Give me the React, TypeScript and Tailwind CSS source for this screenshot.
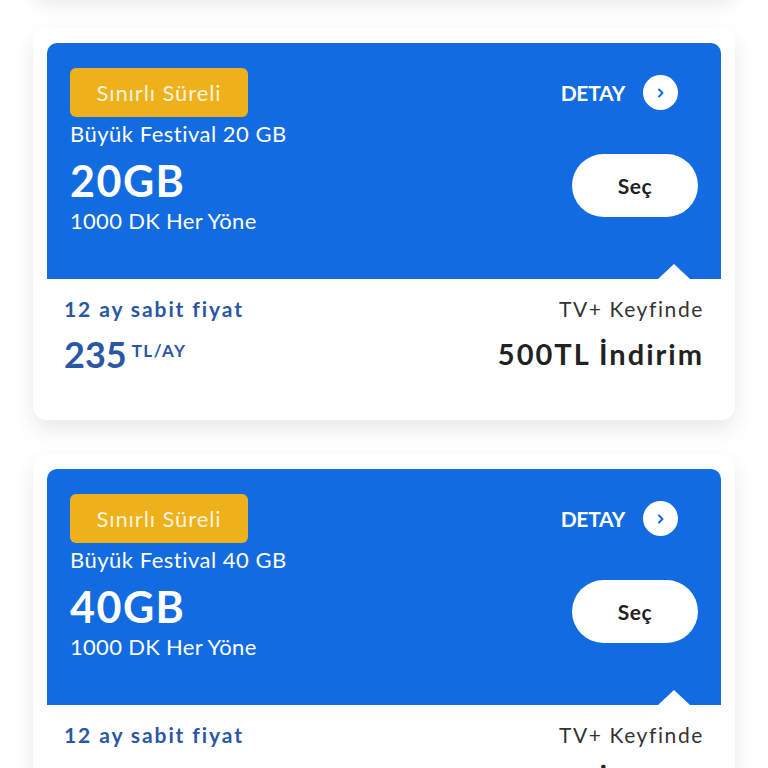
const plans = [
  { name: "Büyük Festival 20 GB", gb: "20GB", price: "235" },
  { name: "Büyük Festival 40 GB", gb: "40GB", price: "235" },
];

function ChevronCircle() {
  return (
    <span className="flex h-[35px] w-[35px] items-center justify-center rounded-full bg-white">
      <svg width="10" height="12" viewBox="0 0 10 12" fill="none">
        <path d="M3 2.5 L6.5 6 L3 9.5" stroke="#126be0" strokeWidth="2" strokeLinecap="round" strokeLinejoin="round" />
      </svg>
    </span>
  );
}

function PlanCard({ name, gb, price }: { name: string; gb: string; price: string }) {
  return (
    <div className="rounded-[14px] bg-white px-[14px] pt-[15px] shadow-[0_10px_22px_rgba(0,0,0,0.09)]">
      {/* blue top */}
      <div className="relative flex h-[236px] justify-between rounded-t-[10px] bg-[#126be0] px-[23px] pt-[25px] text-white">
        <div className="flex flex-col items-start">
          <span className="flex h-[49px] w-[178px] items-center justify-center rounded-[6px] bg-[#eeb11b] text-[22px] tracking-[0.9px] text-[#fdf3dc]">
            Sınırlı Süreli
          </span>
          <p className="mt-[3px] text-[22px] leading-[28px] tracking-[0.5px]">{name}</p>
          <p className="mt-[10px] text-[43px] font-bold leading-[46px] tracking-[1.5px]">{gb}</p>
          <p className="mt-[3px] text-[22px] leading-[28px] tracking-[0.3px]">1000 DK Her Yöne</p>
        </div>
        <div className="flex flex-col items-end">
          <div className="mr-[20px] flex h-[49px] items-center gap-[18px]">
            <span className="text-[21px] font-bold tracking-[-0.3px]">DETAY</span>
            <ChevronCircle />
          </div>
          <button className="mt-[37px] h-[63px] w-[126px] rounded-full bg-white text-[21px] font-bold tracking-[0.5px] text-[#222]">
            Seç
          </button>
        </div>
        <span className="absolute bottom-0 right-[31px] h-0 w-0 border-x-[16px] border-b-[15px] border-x-transparent border-b-white" />
      </div>
      {/* white bottom */}
      <div className="flex h-[141px] justify-between px-[17px] pt-[15px]">
        <div>
          <p className="text-[21px] font-bold leading-[30px] tracking-[1.9px] text-[#2a56a6]">12 ay sabit fiyat</p>
          <p className="mt-[10px] flex items-start text-[#2a56a6]">
            <span className="text-[36px] font-bold leading-[40px]">{price}</span>
            <span className="ml-[5px] mt-[7px] text-[17px] font-bold leading-[20px] tracking-[1.5px]">TL/AY</span>
          </p>
        </div>
        <div className="flex flex-col items-end">
          <p className="text-[21px] leading-[30px] tracking-[1.6px] text-[#333]">TV+ Keyfinde</p>
          <p className="mt-[10px] text-[29px] font-bold leading-[40px] tracking-[2px] text-[#222]">500TL İndirim</p>
        </div>
      </div>
    </div>
  );
}

export default function App() {
  return (
    <div className="h-[768px] overflow-hidden bg-white font-['Lato',sans-serif]">
      <div className="-mt-[398px] flex flex-col gap-[34px] px-[33px]">
        {/* end of the previous card, scrolled off the top */}
        <div className="h-[392px] rounded-[14px] bg-white shadow-[0_10px_22px_rgba(0,0,0,0.09)]" />
        {plans.map((p) => (
          <PlanCard key={p.gb} {...p} />
        ))}
      </div>
    </div>
  );
}
